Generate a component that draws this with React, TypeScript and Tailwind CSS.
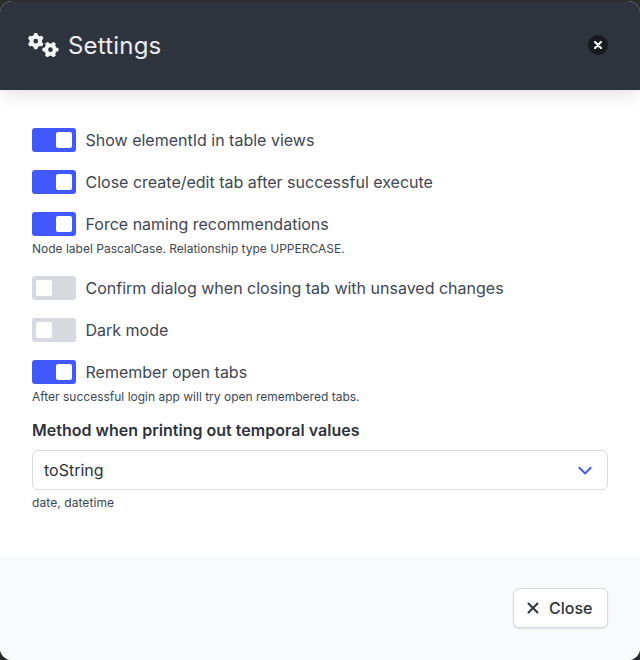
import React from 'react';
import { FaGears } from 'react-icons/fa6';

function Cross({ className, strokeWidth }: { className: string; strokeWidth: number }) {
  return (
    <svg className={className} viewBox="0 0 12 12" fill="none" stroke="currentColor" strokeWidth={strokeWidth} strokeLinecap="round">
      <path d="M1.5 1.5 10.5 10.5M10.5 1.5 1.5 10.5" />
    </svg>
  );
}

function Toggle({ on, label, help }: { on: boolean; label: string; help?: string }) {
  return (
    <div>
      <div className="flex h-6 items-center">
        <button
          type="button"
          role="switch"
          aria-checked={on}
          aria-label={label}
          className={`flex h-6 w-11 items-center rounded-[3px] p-1 ${on ? 'justify-end bg-[#4258ff]' : 'justify-start bg-[#d6d9e0]'}`}
        >
          <span className="h-4 w-4 rounded-[2px] bg-white" />
        </button>
        <span className="ml-[9.5px] text-base leading-6">{label}</span>
      </div>
      {help && <p className="mt-1 text-xs leading-[18px]">{help}</p>}
    </div>
  );
}

export default function App() {
  return (
    <div className="h-[660px] w-[640px] overflow-hidden bg-[#2c2c2c] pt-px font-['Inter',sans-serif] text-[#404654]">
      <div className="flex h-[659px] flex-col overflow-hidden rounded-xl bg-white">
        <header className="relative flex h-[89px] shrink-0 items-center bg-[#2e333d] pr-8 pb-px pl-7 text-[#ebecf0] shadow-[0_8px_16px_-2px_rgba(10,10,10,0.1),0_0_0_1px_rgba(10,10,10,0.02)]">
          <FaGears className="h-6 w-[31px] scale-[1.03] text-[#f3f4f6]" />
          <h1 className="ml-[9px] flex-1 pt-[2px] text-2xl leading-6 tracking-[0.2px]">Settings</h1>
          <button type="button" aria-label="Close" className="flex h-5 w-5 items-center justify-center rounded-full bg-[#181a20]">
            <Cross className="h-2 w-2 text-white" strokeWidth={3.2} />
          </button>
        </header>
        <main className="flex-1 px-8 pt-[38px]">
          <div className="flex flex-col gap-[18px]">
            <Toggle on label="Show elementId in table views" />
            <Toggle on label="Close create/edit tab after successful execute" />
            <Toggle on label="Force naming recommendations" help="Node label PascalCase. Relationship type UPPERCASE." />
            <Toggle on={false} label="Confirm dialog when closing tab with unsaved changes" />
            <Toggle on={false} label="Dark mode" />
            <Toggle on label="Remember open tabs" help="After successful login app will try open remembered tabs." />
          </div>
          <div className="mt-3">
            <p className="text-base leading-6 font-semibold tracking-[0.02px] text-[#2e333d]">Method when printing out temporal values</p>
            <div className="mt-2 flex h-10 items-center justify-between rounded-md border border-[#d6d9e0] bg-white pr-[15px] pl-[11px] text-[#2e333d]">
              <span>toString</span>
              <svg className="h-[9px] w-[14px]" viewBox="0 0 14 9" fill="none" stroke="#4258ff" strokeWidth="2">
                <path d="M0.8 1.2 7 7.4 13.2 1.2" />
              </svg>
            </div>
            <p className="mt-1 text-xs leading-[18px] tracking-[0.08px]">date, datetime</p>
          </div>
        </main>
        <footer className="flex h-[104px] shrink-0 items-center justify-end bg-[#f9fafb] px-8">
          <button type="button" className="flex h-10 w-[95px] items-center rounded-md border border-[#d6d9e0] bg-white pl-[13px] font-medium text-[#2e333d] shadow-[0_1px_2px_rgba(10,10,10,0.1)]">
            <Cross className="h-3 w-3" strokeWidth={2} />
            <span className="ml-[10px]">Close</span>
          </button>
        </footer>
      </div>
    </div>
  );
}
